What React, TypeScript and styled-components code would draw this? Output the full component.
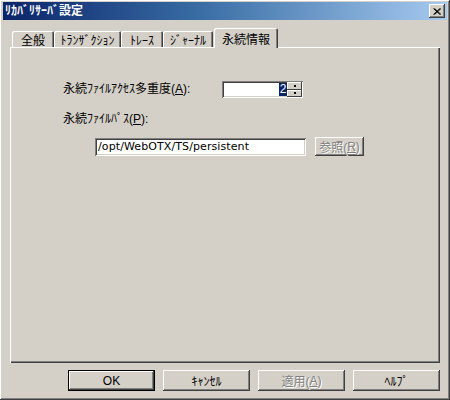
import React from "react";
import styled, { createGlobalStyle, css } from "styled-components";

const GlobalStyle = createGlobalStyle`
  html, body {
    margin: 0;
    padding: 0;
    background: #d4d0c8;
  }
  * {
    box-sizing: border-box;
  }
`;

const FONT = `"Liberation Sans", "Noto Sans CJK JP", sans-serif`;

const raised = css`
  box-shadow: inset -1px -1px 0 #404040, inset 1px 1px 0 #ffffff,
    inset -2px -2px 0 #808080, inset 2px 2px 0 #d4d0c8;
`;

const sunken = css`
  box-shadow: inset 1px 1px 0 #808080, inset -1px -1px 0 #ffffff,
    inset 2px 2px 0 #404040, inset -2px -2px 0 #d4d0c8;
`;

const Window = styled.div`
  width: 450px;
  height: 400px;
  background: #d4d0c8;
  display: flex;
  flex-direction: column;
  padding: 2px 3px 3px 3px;
  font-family: ${FONT};
  font-size: 12px;
  color: #000;
  ${raised};
`;

const TitleBar = styled.div`
  height: 18px;
  display: flex;
  align-items: center;
  justify-content: space-between;
  padding: 0 2px 0 2px;
  background: linear-gradient(to right, #0a246a 0%, #3a6ea5 45%, #a6caf0 100%);
`;

const Title = styled.span`
  color: #fff;
  font-weight: bold;
  font-size: 12px;
  line-height: 18px;
`;

const CloseButton = styled.div`
  width: 16px;
  height: 14px;
  background: #d4d0c8;
  display: flex;
  align-items: center;
  justify-content: center;
  ${raised};
`;

const Body = styled.div`
  flex: 1;
  display: flex;
  flex-direction: column;
  padding: 0 7px;
`;

const TabStrip = styled.div`
  display: flex;
  align-items: flex-end;
  height: 19px;
  margin-top: 8px;
  padding-left: 2px;
`;

const Tab = styled.div<{ $w: number; $active?: boolean }>`
  width: ${(p) => p.$w}px;
  height: ${(p) => (p.$active ? 20 : 16)}px;
  margin-left: ${(p) => (p.$active ? 1 : 0)}px;
  margin-bottom: ${(p) => (p.$active ? -1 : 0)}px;
  position: relative;
  z-index: ${(p) => (p.$active ? 2 : 0)};
  background: #d4d0c8;
  display: flex;
  align-items: center;
  justify-content: center;
  padding-top: ${(p) => (p.$active ? 0 : 1)}px;
  border-top-left-radius: 2px;
  border-top-right-radius: 2px;
  box-shadow: inset 1px 1px 0 #ffffff, inset -1px 0 0 #404040,
    inset -2px 0 0 #808080;
  white-space: nowrap;
`;

const Panel = styled.div`
  height: 316px;
  background: #d4d0c8;
  padding: 34px 0 0 53px;
  display: flex;
  flex-direction: column;
  box-shadow: inset 1px 1px 0 #ffffff, inset -1px -1px 0 #404040,
    inset -2px -2px 0 #808080;
`;

const Row = styled.div<{ $top?: number }>`
  display: flex;
  align-items: center;
  margin-top: ${(p) => p.$top ?? 0}px;
`;

const Label = styled.span<{ $width?: number }>`
  width: ${(p) => (p.$width ? `${p.$width}px` : "auto")};
  white-space: nowrap;
  line-height: 17px;
`;

const Key = styled.span`
  text-decoration: underline;
`;

const SpinBox = styled.div`
  width: 81px;
  height: 17px;
  background: #fff;
  display: flex;
  padding: 2px;
  ${sunken};
`;

const SpinText = styled.div`
  flex: 1;
  display: flex;
  justify-content: flex-end;
  align-items: stretch;
`;

const Selected = styled.span`
  background: #0a246a;
  color: #fff;
  width: 8px;
  text-align: center;
  line-height: 13px;
`;

const SpinButtons = styled.div`
  width: 15px;
  display: flex;
  flex-direction: column;
  margin: -1px -1px -1px 0;
`;

const SpinButton = styled.div`
  flex: 1;
  background: #d4d0c8;
  display: flex;
  align-items: center;
  justify-content: center;
  box-shadow: inset -1px -1px 0 #404040, inset 1px 1px 0 #ffffff;
  &::after {
    content: "";
    width: 2px;
    height: 2px;
    background: #000;
  }
`;

const PathRow = styled.div`
  display: flex;
  align-items: center;
  gap: 9px;
  margin-left: 32px;
  margin-top: 9px;
`;

const TextInput = styled.div`
  width: 211px;
  height: 18px;
  background: #fff;
  padding: 0 3px;
  line-height: 18px;
  font-family: "DejaVu Sans", "Liberation Sans", sans-serif;
  font-size: 11px;
  letter-spacing: 0.1px;
  ${sunken};
`;

const Button = styled.div<{ $w: number; $h: number; $default?: boolean; $disabled?: boolean }>`
  width: ${(p) => p.$w}px;
  height: ${(p) => p.$h}px;
  display: flex;
  align-items: center;
  justify-content: center;
  white-space: nowrap;
  background: #d4d0c8;
  color: ${(p) => (p.$disabled ? "#808080" : "#000")};
  text-shadow: ${(p) => (p.$disabled ? "1px 1px 0 #ffffff" : "none")};
  ${(p) =>
    p.$default
      ? css`
          box-shadow: inset 0 0 0 1px #000, inset -2px -2px 0 #404040,
            inset 2px 2px 0 #ffffff, inset -3px -3px 0 #808080;
        `
      : raised};
`;

const ButtonBar = styled.div`
  display: flex;
  justify-content: flex-end;
  gap: 8px;
  margin-top: 7px;
`;

const App = () => (
  <>
    <GlobalStyle />
    <Window>
      <TitleBar>
        <Title>ﾘｶﾊﾞﾘｻｰﾊﾞ設定</Title>
        <CloseButton>
          <svg width="8" height="7" viewBox="0 0 8 7">
            <path d="M0.5 0.5 L7 6.5 M1.5 0.5 L8 6.5 M7 0.5 L0.5 6.5 M8 0.5 L1.5 6.5" stroke="#000" strokeWidth="1" />
          </svg>
        </CloseButton>
      </TitleBar>
      <Body>
        <TabStrip>
          <Tab $w={42}>全般</Tab>
          <Tab $w={67}>ﾄﾗﾝｻﾞｸｼｮﾝ</Tab>
          <Tab $w={42}>ﾄﾚｰｽ</Tab>
          <Tab $w={50}>ｼﾞｬｰﾅﾙ</Tab>
          <Tab $w={64} $active>
            永続情報
          </Tab>
        </TabStrip>
        <Panel>
          <Row>
            <Label $width={159}>
              永続ﾌｧｲﾙｱｸｾｽ多重度(<Key>A</Key>):
            </Label>
            <SpinBox>
              <SpinText>
                <Selected>2</Selected>
              </SpinText>
              <SpinButtons>
                <SpinButton />
                <SpinButton />
              </SpinButtons>
            </SpinBox>
          </Row>
          <Row $top={13}>
            <Label>
              永続ﾌｧｲﾙﾊﾟｽ(<Key>P</Key>):
            </Label>
          </Row>
          <PathRow>
            <TextInput>/opt/WebOTX/TS/persistent</TextInput>
            <Button $w={49} $h={19} $disabled>
              参照(<Key>R</Key>)
            </Button>
          </PathRow>
        </Panel>
        <ButtonBar>
          <Button $w={87} $h={21} $default>
            OK
          </Button>
          <Button $w={87} $h={21}>
            ｷｬﾝｾﾙ
          </Button>
          <Button $w={87} $h={21} $disabled>
            適用(<Key>A</Key>)
          </Button>
          <Button $w={87} $h={21}>
            ﾍﾙﾌﾟ
          </Button>
        </ButtonBar>
      </Body>
    </Window>
  </>
);

export default App;
